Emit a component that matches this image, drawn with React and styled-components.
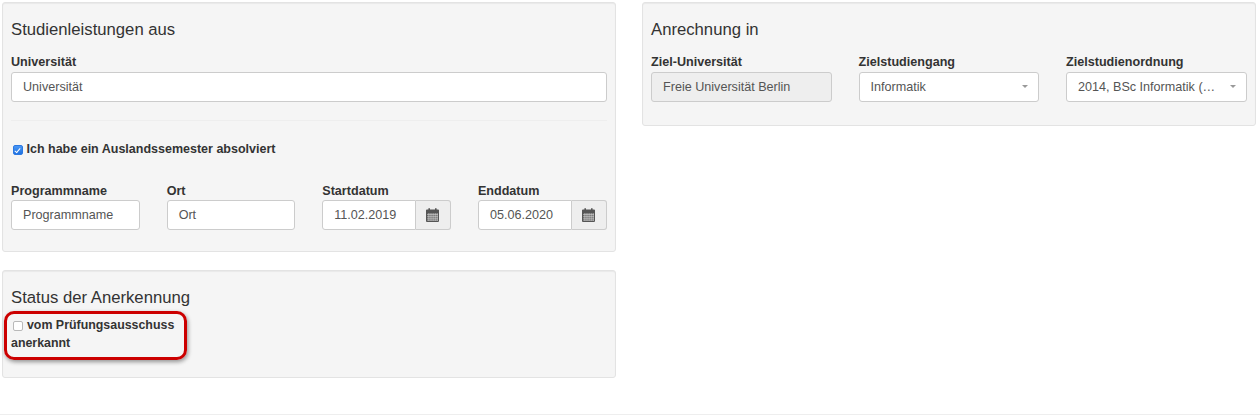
import React from "react"
import styled, { createGlobalStyle } from "styled-components"

const GlobalStyle = createGlobalStyle`
  html, body {
    margin: 0;
    padding: 0;
    background: #fff;
    color: #333;
    font-family: "Liberation Sans", Arial, sans-serif;
    font-size: 13px;
  }
`

const Page = styled.div`
  width: 1260px;
  height: 417px;
  padding: 2px 0 0 2px;
  box-sizing: border-box;
  overflow: hidden;
`

const Columns = styled.div`
  display: grid;
  grid-template-columns: 614px 614px;
  column-gap: 26px;
  align-items: start;
`

const Stack = styled.div`
  display: flex;
  flex-direction: column;
  gap: 18px;
`

const Well = styled.section`
  box-sizing: border-box;
  height: ${props => props.$height}px;
  padding: 0 8.5px 0 8px;
  background: #f5f5f5;
  border: 1px solid #e3e3e3;
  border-radius: 3px;
  box-shadow: inset 0 1px 1px rgba(0, 0, 0, 0.05);
`

const Title = styled.h4`
  margin: 17px 0 ${props => props.$gap}px;
  font-size: 16.7px;
  line-height: 20px;
  font-weight: 400;
  color: #333;
`

const Label = styled.label`
  display: block;
  font-size: 12.6px;
  line-height: 15px;
  font-weight: 700;
  color: #333;
  margin-bottom: ${props => props.$gap ?? 2}px;
`

const Input = styled.div`
  box-sizing: border-box;
  flex: 1;
  min-width: 0;
  height: 30px;
  padding: 0 10px 1px 11px;
  display: flex;
  align-items: center;
  background: ${props => (props.$disabled ? "#eeeeee" : "#fff")};
  border: 1px solid #ccc;
  border-radius: ${props => (props.$joined ? "3px 0 0 3px" : "3px")};
  font-size: 12.6px;
  color: #555;
  white-space: nowrap;
`

const Divider = styled.hr`
  margin: 18px 0 0;
  border: 0;
  border-top: 1px solid #eeeeee;
`

const CheckRow = styled.label`
  display: flex;
  align-items: center;
  gap: 3px;
  margin-top: 20px;
  font-size: 12.5px;
  line-height: 17px;
  font-weight: 700;
  color: #333;
`

const Check = styled.input`
  appearance: none;
  position: relative;
  box-sizing: border-box;
  width: 10px;
  height: 10px;
  margin: 1px 1px 0 1.5px;
  flex: none;
  background: #fff;
  border: 1px solid #b9b9b9;
  border-radius: 2px;

  &:checked {
    background: linear-gradient(#4a97f5, #1f72e0);
    border-color: #2a78e2;
  }

  &:checked::after {
    content: "";
    position: absolute;
    left: 2.5px;
    top: 0.5px;
    width: 2px;
    height: 5px;
    border: solid #fff;
    border-width: 0 1.3px 1.3px 0;
    transform: rotate(40deg);
  }
`

const FieldRow = styled.div`
  display: grid;
  grid-template-columns: repeat(${props => props.$cols}, minmax(0, 1fr));
  column-gap: 27px;
  margin-top: ${props => props.$top || 0}px;
`

const InputGroup = styled.div`
  display: flex;
`

const Addon = styled.span`
  box-sizing: border-box;
  flex: none;
  width: 35px;
  height: 30px;
  display: flex;
  align-items: center;
  justify-content: center;
  background: #eeeeee;
  border: 1px solid #ccc;
  border-left: 0;
  border-radius: 0 3px 3px 0;
  color: #555;
`

const Caret = styled.span`
  margin-left: auto;
  flex: none;
  width: 0;
  height: 0;
  border-left: 3px solid transparent;
  border-right: 3px solid transparent;
  border-top: 3px solid #999;
`

const StatusBox = styled.div`
  position: relative;
  width: 170px;
`

const StatusLabel = styled.label`
  display: block;
  font-size: 12.4px;
  line-height: 18px;
  font-weight: 700;
  color: #333;
`

const InlineCheck = styled(Check)`
  vertical-align: -2px;
  margin: 0 0.5px 0 2px;
`

const Highlight = styled.span`
  position: absolute;
  left: -7px;
  top: -5px;
  width: 182.5px;
  height: 49px;
  box-sizing: border-box;
  border: 3px solid #cc0000;
  border-radius: 10px;
  box-shadow: 1px 2px 4px rgba(0, 0, 0, 0.4);
  pointer-events: none;
`

const Rule = styled.hr`
  position: absolute;
  left: 0;
  right: 0;
  top: 414px;
  margin: 0;
  border: 0;
  border-top: 1px solid #eeeeee;
`

const CalendarIcon = () => (
  <svg width="13" height="14" viewBox="0 0 13 14" fill="#555" aria-hidden="true">
    <path d="M0 2.2C0 1.7.4 1.4.9 1.4H2.4V.3h1.6v1.1h5V.3h1.6v1.1h1.5c.5 0 .9.3.9.8V13.1c0 .5-.4.9-.9.9H.9c-.5 0-.9-.4-.9-.9Z" />
    <path
      d="M1 6.4h11M1 8.3h11M1 10.2h11M1 12.1h11M2.9 5v8M5 5v8M7.1 5v8M9.2 5v8M11.2 5v8"
      stroke="#eeeeee"
      strokeWidth=".55"
      fill="none"
    />
  </svg>
)

const TextField = ({ label, value, gap }) => (
  <div>
    <Label $gap={gap}>{label}</Label>
    <InputGroup>
      <Input>{value}</Input>
    </InputGroup>
  </div>
)

const DateField = ({ label, value }) => (
  <div>
    <Label $gap={1}>{label}</Label>
    <InputGroup>
      <Input $joined>{value}</Input>
      <Addon>
        <CalendarIcon />
      </Addon>
    </InputGroup>
  </div>
)

const SelectField = ({ label, value }) => (
  <div>
    <Label>{label}</Label>
    <InputGroup>
      <Input>
        {value}
        <Caret />
      </Input>
    </InputGroup>
  </div>
)

const App = () => (
  <Page>
    <GlobalStyle />
    <Columns>
      <Stack>
        <Well $height={250}>
          <Title $gap={15}>Studienleistungen aus</Title>
          <TextField label="Universität" value="Universität" />
          <Divider />
          <CheckRow>
            <Check type="checkbox" defaultChecked />
            Ich habe ein Auslandssemester absolviert
          </CheckRow>
          <FieldRow $cols={4} $top={26}>
            <TextField label="Programmname" value="Programmname" gap={1} />
            <TextField label="Ort" value="Ort" gap={1} />
            <DateField label="Startdatum" value="11.02.2019" />
            <DateField label="Enddatum" value="05.06.2020" />
          </FieldRow>
        </Well>
        <Well $height={108}>
          <Title $gap={8}>Status der Anerkennung</Title>
          <StatusBox>
            <StatusLabel>
              <InlineCheck type="checkbox" /> vom Prüfungsausschuss anerkannt
            </StatusLabel>
            <Highlight />
          </StatusBox>
        </Well>
      </Stack>
      <Well $height={124}>
        <Title $gap={15}>Anrechnung in</Title>
        <FieldRow $cols={3}>
          <div>
            <Label>Ziel-Universität</Label>
            <InputGroup>
              <Input $disabled>Freie Universität Berlin</Input>
            </InputGroup>
          </div>
          <SelectField label="Zielstudiengang" value="Informatik" />
          <SelectField label="Zielstudienordnung" value="2014, BSc Informatik (…" />
        </FieldRow>
      </Well>
    </Columns>
    <Rule />
  </Page>
)

export default App
